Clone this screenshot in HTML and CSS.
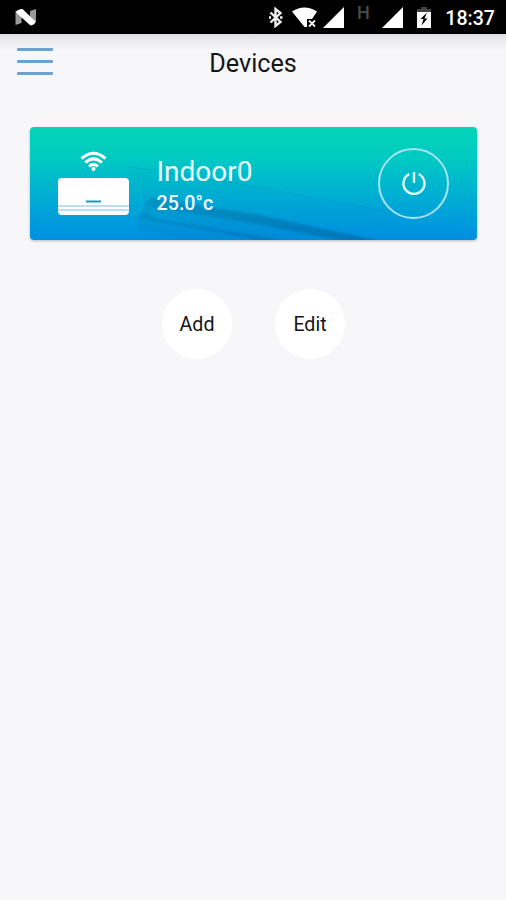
FILE: index.html
```
<!DOCTYPE html>
<html lang="en">
<head>
  <meta charset="UTF-8" />
  <title>Devices</title>
  <link rel="stylesheet" href="styles.css">
</head>
<body>
  <div class="status-bar">
    <svg class="n-logo" width="22" height="18" viewBox="0 0 22 18">
      <path fill="#999" d="M0.500 2l6-2v14l-6 2zM15 2l6-2v13l-6 3z" />
      <path fill="#fff" d="M1 3.500Q3 0 7.500 0L20.500 12.500Q20 16 15.500 16.500z" />
    </svg>
    <div class="status-icons">
      <svg class="bluetooth" width="14" height="21" viewBox="0 0 14 21" fill="none" stroke="#eee" stroke-width="2.400">
        <path d="M1.500 5.500l10 9.500-5 4V2l5 4-10 9.500" />
        <path d="M0 10.500h2M11 10.500h2.500" />
      </svg>
      <svg class="wifi" width="27" height="22" viewBox="0 0 27 22">
        <path fill="#fff" d="M0 4.500Q12.500-3.500 25 4.500L20 12H15v8h-2.500z" />
        <path fill="none" stroke="#eee" stroke-width="1.800" d="M17 13.500l6 6M23 13.500l-6 6" />
      </svg>
      <svg class="signal" width="21" height="21" viewBox="0 0 21 21"><path fill="#fff" d="M21 0v21H0z" /></svg>
      <span class="network">H</span>
      <svg class="signal" width="21" height="21" viewBox="0 0 21 21"><path fill="#fff" d="M21 0v21H0z" /></svg>
      <svg class="battery" width="14" height="21" viewBox="0 0 14 21">
        <path fill="#444" d="M4 0h6v2h4v4H0V2h4z" />
        <path fill="#fff" d="M0 5h14v16H0z" />
        <path fill="#000" d="M10 5.500L3.500 12H6.500L4.500 18.500l6-7H7.500z" />
      </svg>
      <span class="time">18:37</span>
    </div>
  </div>

  <header class="header">
    <div class="menu">
      <span></span>
      <span></span>
      <span></span>
    </div>
    <h1>Devices</h1>
  </header>

  <main>
    <div class="device-card">
      <svg class="card-art" width="447" height="113" viewBox="0 0 447 113">
        <defs>
          <linearGradient id="shade" gradientUnits="userSpaceOnUse" x1="110" y1="0" x2="350" y2="0">
            <stop offset="0" stop-color="#00588c" stop-opacity=".22" />
            <stop offset="1" stop-color="#00588c" stop-opacity=".48" />
          </linearGradient>
          <filter id="soft"><feGaussianBlur stdDeviation=".8" /></filter>
        </defs>
        <path fill="#0064be" opacity=".03" d="M95 39L220 58 356 84 447 104v9H106l10-42z" />
        <g filter="url(#soft)">
          <path fill="url(#shade)" d="M117 70L160 77 230 88 350 114H314L215 95 115 79z" />
          <path fill="#00588c" opacity=".08" d="M115 79L215 95 314 114H258L180 99 112 86z" />
          <path fill="url(#shade)" d="M113 85L125 91 180 100 256 114H232L180 104 108 91z" />
          <path fill="#00588c" opacity=".08" d="M108 91L180 104 226 114H150L106 101z" />
        </g>
        <path fill="none" stroke="#00588c" stroke-opacity=".12" d="M95 39L220 59 356 84" />
      </svg>

      <svg class="ac-unit" width="71" height="64" viewBox="0 0 71 64">
        <g fill="none" stroke="#fff" stroke-width="3">
          <path d="M23.500 7.500Q35.500-3 47.500 7.500" />
          <path d="M27.200 11.700Q35.500 4 43.800 11.700" />
          <path d="M31 15.500Q35.500 11.500 40 15.500" />
        </g>
        <circle cx="35.500" cy="18" r="2" fill="#fff" />
        <rect y="27" width="71" height="37" rx="4" fill="#fff" />
        <path stroke="#2495bb" stroke-width="2" d="M28 50.500h15" />
        <path stroke="#a9d5ee" stroke-width="1.500" d="M0 55h71M0 59h71" />
      </svg>

      <div class="info">
        <div class="name">Indoor0</div>
        <div class="temperature">25.0°c</div>
      </div>

      <div class="power">
        <svg width="26" height="26" viewBox="0 0 26 26" fill="none" stroke="#e4faff" stroke-width="2.400">
          <path d="M8.300 3A10.500 10.500 0 1 0 17.700 3" />
          <path d="M13 1v11" />
        </svg>
      </div>
    </div>

    <div class="actions">
      <button>Add</button>
      <button>Edit</button>
    </div>
  </main>
</body>
</html>
```
FILE: styles.css
```
body {
  margin: 0;
  min-height: 900px;
  background: #f7f7fa;
  font-family: Roboto, sans-serif;
  color: #151515;
}
svg {
  display: block;
}
.status-bar {
  display: flex;
  justify-content: space-between;
  height: 34px;
  padding: 0 11px 0 15px;
  background: #000;
  color: #fff;
}
.n-logo {
  margin-top: 9px;
}
.status-icons {
  display: flex;
  align-items: flex-start;
}
.bluetooth {
  margin: 7px 9px 0 0;
}
.wifi {
  margin: 7px 4px 0 0;
}
.signal {
  margin-top: 7px;
}
.network {
  width: 38px;
  padding-top: 2px;
  text-align: center;
  font-size: 18px;
  line-height: 21px;
  font-weight: 500;
  color: #4c4c4c;
}
.battery {
  margin: 7px 14px 0 14px;
}
.time {
  font-size: 19.6px;
  line-height: 37px;
  font-weight: 500;
}
.header {
  display: grid;
  grid-template-columns: 36px 1fr 36px;
  height: 59px;
  padding: 0 17px;
  background: linear-gradient(#dedee0, #ebebed 6px, #f7f7fa 17px);
}
.menu {
  display: flex;
  flex-direction: column;
  gap: 9px;
  padding-top: 14px;
}
.menu span {
  height: 3px;
  border-radius: 1px;
  background: #69a3d4;
}
h1 {
  margin: 0;
  text-align: center;
  font-size: 25.2px;
  line-height: 59px;
  font-weight: 400;
}
main {
  padding: 34px 29px 0 30px;
}
.device-card {
  position: relative;
  display: flex;
  align-items: flex-start;
  height: 112.5px;
  border-radius: 4px;
  overflow: hidden;
  background: linear-gradient(#05d4b8, #00cac2 27%, #00b3d0 55%, #009fdb 80%, #0090e3);
  box-shadow: 0 1px 3px rgba(0, 0, 0, 0.25);
  color: #effcff;
}
/* louvres behind the card content */
.card-art {
  position: absolute;
  top: 0;
  left: 0;
}
.ac-unit,
.info,
.power {
  position: relative;
}
.ac-unit {
  margin: 24px 0 0 28px;
}
.info {
  flex: 1;
  margin: 28px 0 0 27.5px;
}
.name {
  font-size: 28px;
  line-height: 34px;
}
.temperature {
  font-size: 19.7px;
  line-height: 30px;
  font-weight: 500;
}
.power {
  display: flex;
  align-items: center;
  justify-content: center;
  box-sizing: border-box;
  width: 71px;
  height: 71px;
  margin: 21px 28px 0 0;
  border: 2px solid #a5e4f3;
  border-radius: 50%;
}
.actions {
  display: flex;
  justify-content: center;
  gap: 43px;
  margin-top: 49.5px;
}
button {
  width: 70px;
  height: 70px;
  padding: 0;
  border: 0;
  border-radius: 50%;
  background: #fff;
  font-family: inherit;
  font-size: 19.6px;
  color: #151515;
}
```
